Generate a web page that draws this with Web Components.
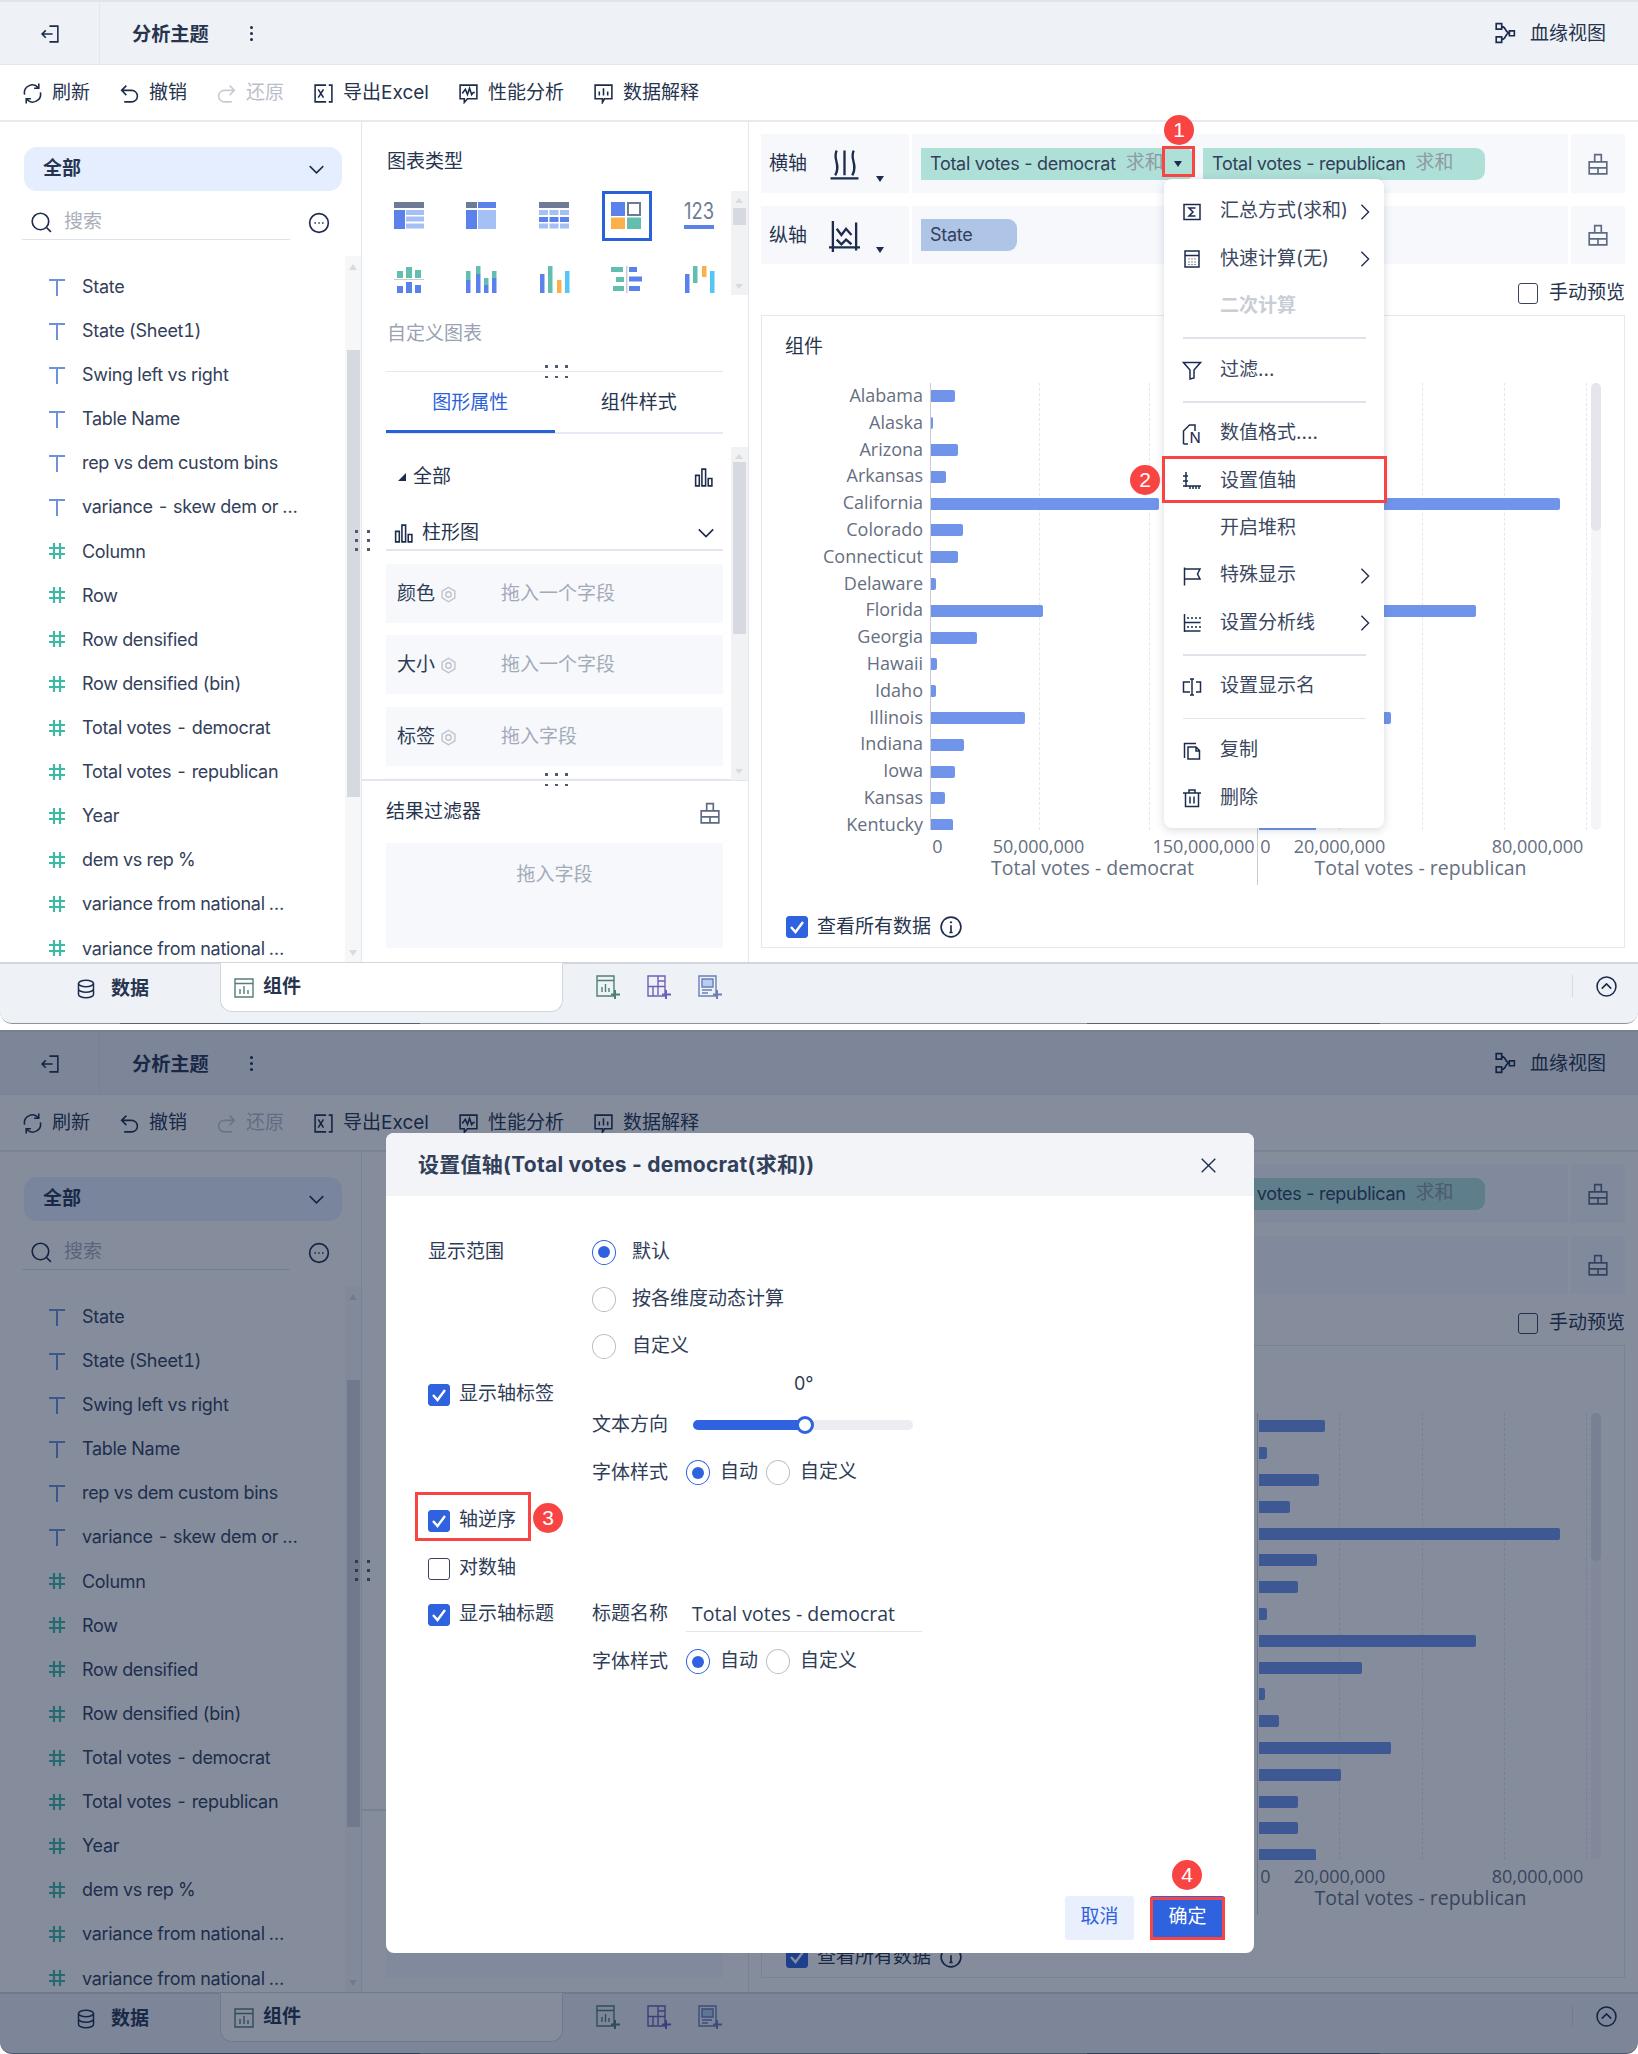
<!DOCTYPE html>
<html lang="zh">
<head>
<meta charset="utf-8">
<title>分析主题</title>
<style>
  html, body { margin: 0; background: #fff; }
  body {
    width: 1638px;
    font: 19px/1.3 Inter, "Noto Sans CJK SC", sans-serif;
    color: #27344e;
  }
  app-window + app-window { margin-top: 6px; }
</style>
</head>
<body>

<app-window>
  <context-menu></context-menu>
  <red-box x="1162" y="146" w="33" h="31"></red-box>
  <red-box x="1162" y="456" w="225" h="47"></red-box>
  <step-badge x="1179" y="130">1</step-badge>
  <step-badge x="1145" y="480">2</step-badge>
</app-window>

<app-window>
  <axis-dialog></axis-dialog>
  <red-box x="415" y="462" w="116" h="49"></red-box>
  <red-box x="1150" y="867" w="75" h="43"></red-box>
  <step-badge x="548" y="488">3</step-badge>
  <step-badge x="1187" y="845">4</step-badge>
</app-window>

<script>
const INK = '#1d2c4c';

const svg = (w, h, vb, body, stroke = INK, sw = 1.5) =>
  `<svg width="${w}" height="${h}" viewBox="0 0 ${vb}" fill="none" stroke="${stroke}" stroke-width="${sw}" style="display:block;flex:none">${body}</svg>`;

// 20x20 line icons
const lines = {
  back: '<path d="M9 3h8v15H9M12 10.500H2M5.500 7 2 10.500 5.500 14"/>',
  refresh: '<path d="M2.500 11A7.500 7.500 0 0 1 15.500 4.500M17.500 9A7.500 7.500 0 0 1 4.500 15.500M16 .5v4.500h-4.500M4 19.500V15h4.500"/>',
  undo: '<path d="M7 2.500 2.500 7 7 11.500M2.500 7H12a5.500 5.500 0 0 1 0 11H5"/>',
  excel: '<path d="M12.500 2H2v16h10.500M15 2h3v16h-3M5 6l5 8M10 6l-5 8"/>',
  perf: '<path d="M2 2h16v13h-9l-3 3.500V15H2zM4 10l3-4 2 5 2-6 2 6 1.500-2H16"/>',
  explain: '<path d="M2 2h16v13h-7l-2 3.500V15H2zM6 8v4M10 5v7M14 8v4"/>',
  lineage: '<path d="M2 1.500h5v5H2zM2 13.500h5v5H2zM14 8h4.500v4.500H14zM7 4c4 0 3 6 7 6M7 16c4 0 3-6 7-6"/>',
  search: '<circle cx="9.500" cy="9.500" r="7.500"/><path d="m15 15 4 4"/>',
  more: '<circle cx="10" cy="10" r="8.500"/><path d="M6 10h1M9.500 10h1M13 10h1" stroke-width="1.800"/>',
  bars: '<path d="M2.500 8h3.500v10H2.500zM8.500 2H12v16H8.500zM14.500 11H18v7h-3.500z"/>',
  stack: '<path d="M2 8h16v11H2zM7 8V1.500h6V8M2 13.500h16M10 13.500V19"/>',
  wave: '<path d="M1 19h18M5 1C2 6 8 10 4 17M10 1v16M16 1c-3 5 3 9-1 16"/>',
  zig: '<path d="M2.500 0v20M0 17h20M17.500 1v18M5 5l3 4 3-4 3.500 4M5 12l3 3 3-3 3.500 3"/>',
  sigma: '<path d="M2 2.500h16v15H2zM13.500 6H7l4 4-4 4h6.500"/>',
  calc: '<path d="M3 2h14v16H3zM3 6.500h14"/><path d="M6.500 10h1M9.500 10h1M12.500 10h1M6.500 13h1M9.500 13h1M12.500 13h1M6.500 15.500h1M9.500 15.500h1M12.500 15.500h1" stroke-width="1.200"/>',
  funnel: '<path d="M1.500 2.500h17L12 10v8l-4 1v-9z"/>',
  axis: '<path d="M4 1v15M1 5h5M1 10h5M1 15h18M8 15v3M11 15v3M14 15v3M17 15v3"/>',
  flag: '<path d="M2.500 1.500v18M2.500 3h15.500l-2.500 5 2.500 5H2.500"/>',
  lines: '<path d="M2.500 1v18M2.500 18h16M2.500 9.500h16" /><path d="M5 5h14M5 14h14" stroke-dasharray="2 2"/>',
  rename: '<path d="M8 5H1.500v10H8M14 5h4.500v10H14M8 2h4M8 18h4M10 2v16"/>',
  copy: '<path d="M14 2.500H2.500V17M6 6h8l3.500 3.500V18H6zM14 6v4h3.500"/>',
  trash: '<path d="M1 5h18M7 5V2h6v3M3.500 5v13.500h13V5M8 8.500v7M12 8.500v7"/>',
  db: '<ellipse cx="10" cy="4.500" rx="7.500" ry="3.200"/><path d="M2.500 4.500v11c0 1.800 3.400 3.200 7.500 3.200s7.500-1.400 7.500-3.200v-11M2.500 10c0 1.800 3.400 3.200 7.500 3.200s7.500-1.400 7.500-3.200"/>',
  up: '<circle cx="10" cy="10" r="9"/><path d="m5.500 12 4.500-4.500 4.500 4.500"/>',
  info: '<circle cx="10" cy="10" r="9"/><path d="M10 8.500V15M8.500 15h3"/><path d="M10 5v1.500" stroke-width="2"/>',
  chevD: '<path d="m2 6 8 8 8-8"/>',
  chevR: '<path d="m6 2 8 8-8 8"/>',
  gear: '<path d="M10 1.500 17.500 6v8L10 18.500 2.500 14V6z"/><circle cx="10" cy="10" r="3.200"/>',
  close: '<path d="m2 2 16 16M18 2 2 18"/>'
};
const ic = (name, size = 20, stroke = INK, sw = 1.5) => svg(size, size, '20 20', lines[name], stroke, sw);
const fmtIcon = svg(20, 22, '20 22', '<path d="M1.500 21V8l6-6H13v6M1.500 21H6"/><text x="7.500" y="20" font-family="Inter" font-size="15" fill="#1d2c4c" stroke="none">N</text>');

const boxes = (list) => list.map(([x, y, w, h, c]) => `<rect x="${x}" y="${y}" width="${w}" height="${h}" fill="${c}"/>`).join('');
const G = '#6d7c94', B = '#5b82ea', L = '#a5c0f4', T = '#62bfb0', O = '#fbb04c', S = '#54c6f5';
const typeIcon = (body) => `<svg width="31" height="27" viewBox="0 0 31 27" style="display:block">${body}</svg>`;
const chartTypes = [
  boxes([[0,0,30,6,G],[0,8,11,19,B],[12,8,18,5,L],[12,14.500,18,5,L],[12,21.500,18,5,L]]),
  boxes([[0,0,11,6,G],[12,0,18,6,B],[0,8,11,19,B],[12,8,18,19,L]]),
  boxes([[0,0,30,6,G],[0,8,9,5,L],[10.500,8,9,5,L],[21,8,9,5,L],[0,15,9,5,B],[10.500,15,9,5,B],[21,15,9,5,B],[0,21.500,9,5,L],[10.500,21.500,9,5,L],[21,21.500,9,5,L]]),
  boxes([[0,0,14,14,B],[0,15.500,14,12,O],[16,15.500,14,12,T]]) + `<rect x="17" y="1" width="12" height="12" fill="#fff" stroke="${G}" stroke-width="2"/>`,
  `<text x="0" y="17" font-family="Inter" font-size="23" textLength="30" lengthAdjust="spacingAndGlyphs" fill="${G}">123</text>` + boxes([[0,23,30,4,B]]),
  boxes([[3,5,6,7,T],[12,1,6,11,T],[21,4,6,8,T],[0,13,30,1,'#c6cbd6'],[3,20,6,7,B],[12,16,6,11,B],[21,19,6,8,B]]),
  boxes([[0,5,4.500,9,T],[0,14,4.500,13,B],[10,0,4.500,8,T],[10,8,4.500,19,B],[18,12,4.500,7,T],[18,19,4.500,8,B],[26,5,4.500,7,T],[26,12,4.500,15,B]]),
  boxes([[1,8,4.500,19,B],[9,0,4.500,27,T],[18,14,4.500,13,O],[26,5,4.500,22,S]]),
  boxes([[0,1,12,5,T],[5,11,8,5,T],[2,20,11,5,T],[15,0,1.500,27,'#c6cbd6'],[18,1,8,5,B],[18,10.500,13,5,B],[18,20,11,5,B]]),
  boxes([[1,8,4.500,19,B],[9,0,4.500,17,T],[18,0,4.500,11,O],[26,5,4.500,22,S]])
];

class Part extends HTMLElement {
  connectedCallback() {
    if (this.shadowRoot) return;
    this.attachShadow({ mode: 'open' }).innerHTML = `<style>${this.constructor.css}</style>${this.markup()}`;
  }
}

class AppWindow extends Part {
  static css = `
    :host { display: flex; flex-direction: column; position: relative; height: 1024px; overflow: hidden;
      border-radius: 0 0 12px 12px; }
    .main { display: flex; height: 840px; flex: none; }
    top-bar { flex: none; } tool-bar { flex: none; } bottom-bar { flex: none; }
  `;
  markup() {
    return `<top-bar></top-bar><tool-bar></tool-bar>
      <div class="main"><field-list></field-list><chart-setup></chart-setup><chart-area></chart-area></div>
      <bottom-bar></bottom-bar><slot></slot>`;
  }
}

class TopBar extends Part {
  static css = `
    :host { display: flex; align-items: center; height: 65px; box-sizing: border-box; background: #eef1f6;
      border-top: 2px solid #e1e4e9; border-bottom: 1px solid #e2e5ec; }
    .back { width: 100px; height: 100%; display: flex; justify-content: center; align-items: center; border-right: 1px solid #e4e7ed; box-sizing: border-box; padding-left: 2px; }
    b { margin-left: 32px; padding-top: 2px; font-size: 19.200px; font-weight: 700; }
    .dots { margin-left: 41px; display: grid; gap: 3px; }
    .dots i { display: block; width: 3px; height: 3px; border-radius: 2px; background: ${INK}; }
    .right { margin-left: auto; margin-right: 32px; display: flex; align-items: center; gap: 14px; }
    .right span { padding-top: 2px; }
  `;
  markup() {
    return `<div class="back">${ic('back', 21)}</div><b>分析主题</b>
      <div class="dots"><i></i><i></i><i></i></div>
      <div class="right">${ic('lineage', 22)}<span>血缘视图</span></div>`;
  }
}

class ToolBar extends Part {
  static css = `
    :host { display: flex; align-items: center; gap: 29px; height: 57px; box-sizing: border-box; padding: 2px 0 0 22px; background: #fff; border-bottom: 2px solid #e8e9ee; }
    span { display: flex; align-items: center; gap: 9px; white-space: nowrap; }
    .off { color: #b9bfca; }
  `;
  markup() {
    const items = [['refresh', '刷新'], ['undo', '撤销'], ['undo', '还原', 1], ['excel', '导出Excel'], ['perf', '性能分析'], ['explain', '数据解释']];
    return items.map(([i, t, off]) => off
      ? `<span class="off"><span style="transform:scaleX(-1)">${ic(i, 21, '#c6cbd4')}</span>${t}</span>`
      : `<span>${ic(i, 21)}${t}</span>`).join('');
  }
}

class FieldList extends Part {
  static css = `
    :host { display: block; position: relative; width: 362px; flex: none; box-sizing: border-box; border-right: 1px solid #e6e7ee; }
    .pick { display: flex; align-items: center; justify-content: space-between; margin: 25px 0 0 24px; width: 318px; height: 44px; box-sizing: border-box; padding: 0 17px 0 19px; background: #e5eeff; border-radius: 13px; font-weight: 700; }
    .search { display: flex; height: 49px; }
    .input { display: flex; align-items: center; gap: 12px; margin-left: 22px; width: 268px; height: 49px; padding: 14px 0 0 8px; box-sizing: border-box; border-bottom: 1.500px solid #dfe2ec; color: #a9afbb; }
    .search > svg { margin: 21px 0 0 18px; }
    .rows { margin-top: 24.500px; height: 697.500px; overflow: hidden; }
    .row { display: flex; align-items: center; height: 44.120px; padding-left: 48px; gap: 16px; white-space: nowrap; font-size: 18px; letter-spacing: -.3px; font-feature-settings: 'tnum'; color: #33405a; }
    .row u { text-decoration: none; margin-left: 4px; letter-spacing: .5px; }
    .track { position: absolute; left: 345px; top: 134px; width: 16px; height: 706px; background: #f6f7f8; }
    .thumb { position: absolute; left: 2px; right: 1px; top: 94px; height: 447px; background: #d6d9df; }
    .tri { position: absolute; left: 4px; top: 8px; border: 4px solid transparent; border-bottom: 6px solid #d8dbe0; border-top: 0; }
    .tri.down { top: auto; bottom: 6px; border-top: 6px solid #d8dbe0; border-bottom: 0; }
    .grip { position: absolute; left: 355px; top: 408px; display: grid; grid-template-columns: 2.500px 2.500px; gap: 6.500px 9.500px; }
    .grip i { height: 2.500px; background: #505a6e; }
  `;
  markup() {
    const tIcon = svg(18, 18, '18 18', '<path d="M1 2h16M9 2v16"/>', '#6d92dc', 2);
    const nIcon = svg(18, 18, '18 18', '<path d="M1 6h16M1 12h16M6 1v16M12 1v16"/>', '#3fb8a5', 2.200);
    const text = ['State', 'State (Sheet1)', 'Swing left vs right', 'Table Name', 'rep vs dem custom bins', 'variance - skew dem or<u>…</u>'];
    const nums = ['Column', 'Row', 'Row densified', 'Row densified (bin)', 'Total votes - democrat', 'Total votes - republican', 'Year', 'dem vs rep %', 'variance from national<u>…</u>', 'variance from national<u>…</u>'];
    return `<div class="pick">全部${ic('chevD', 17, INK, 1.800)}</div>
      <div class="search"><div class="input">${ic('search', 22)}搜索</div>${ic('more', 22)}</div>
      <div class="rows">
        ${text.map(t => `<div class="row">${tIcon}<span>${t}</span></div>`).join('')}
        ${nums.map(t => `<div class="row">${nIcon}<span>${t}</span></div>`).join('')}
      </div>
      <div class="track"><i class="tri"></i><div class="thumb"></div><i class="tri down"></i></div>
      <div class="grip"><i></i><i></i><i></i><i></i><i></i><i></i></div>`;
  }
}

class ChartSetup extends Part {
  static css = `
    :host { display: flex; flex-direction: column; position: relative; width: 387px; flex: none; box-sizing: border-box; border-right: 1.500px solid #e6e7ee; }
    .head { margin: 28px 0 0 25px; height: 24px; line-height: 24px; }
    .types { display: grid; grid-template-columns: repeat(5, 72.500px); grid-auto-rows: 63.500px; margin: 10px 0 0 11px; place-items: center; }
    .sel { width: 50px; height: 50px; box-sizing: border-box; border: 3px solid #2b60db; display: flex; align-items: center; justify-content: center; }
    .custom { margin: 11px 0 0 25px; height: 24px; line-height: 24px; color: #9aa2b1; }
    .rule { margin: 25px 25px 0 24px; height: 1px; background: #e6e8ee; flex: none; }
    .tabs { display: flex; margin: 0 25px 0 24px; height: 62px; border-bottom: 2px solid #e6e8f2; box-sizing: border-box; }
    .tabs span { width: 169px; text-align: center; line-height: 61px; }
    .tabs .on { color: #2b60db; border-bottom: 3px solid #2b60db; height: 61px; box-sizing: border-box; }
    .attrs { height: 345px; flex: none; overflow: hidden; padding: 17px 25px 0 24px; box-sizing: border-box; }
    .all { display: flex; align-items: center; height: 48px; padding-top: 4px; box-sizing: border-box; }
    .all i { border: 4px solid transparent; border-right-color: ${INK}; border-bottom-color: ${INK}; margin: 0 7px 0 12px; }
    .all svg { margin-left: auto; margin-right: 9px; }
    .mark { display: flex; align-items: center; height: 52px; box-sizing: border-box; padding: 18px 8px 0 7px; border-bottom: 2px solid #e2e4ee; gap: 8px; }
    .mark svg:last-child { margin-left: auto; }
    .slotbox { display: flex; align-items: center; height: 59px; box-sizing: border-box; margin-top: 12.500px; padding: 2px 0 0 11px; background: #f6f8fc; color: #2f3c56; }
    .slotbox b { font-weight: 400; width: 43px; }
    .slotbox span { margin-left: 44px; color: #a4abb8; }
    .sep { height: 1.500px; background: #e4e6ef; flex: none; }
    .filter { display: flex; align-items: center; justify-content: space-between; margin: 0 27px 0 24px; height: 62px; padding-top: 2px; box-sizing: border-box; }
    .drop { margin: 0 25px 0 24px; height: 105px; background: #f6f8fc; text-align: center; color: #a4abb8; padding-top: 20px; box-sizing: border-box; }
    .track { position: absolute; left: 369px; top: 69px; width: 17px; height: 104px; background: #f1f2f4; }
    .track.b { top: 325px; height: 333px; }
    .thumb { position: absolute; left: 2px; right: 2px; top: 17px; height: 17px; background: #d6d9df; }
    .b .thumb { top: 15px; height: 172px; }
    .tri { position: absolute; left: 4px; top: 7px; border: 4.500px solid transparent; border-bottom: 5px solid #d8dbe0; border-top: 0; }
    .tri.down { top: auto; bottom: 6px; border-top: 5px solid #d8dbe0; border-bottom: 0; }
    .grip { position: absolute; left: 183px; display: grid; grid-template-columns: repeat(3, 2.500px); gap: 8px 7.500px; }
    .grip i { height: 2.500px; background: #505a6e; }
  `;
  markup() {
    const cells = chartTypes.map((b, i) => i === 3 ? `<div class="sel">${typeIcon(b)}</div>` : typeIcon(b)).join('');
    const gearIc = ic('gear', 17, '#bcc1cb', 1.600);
    const fill = (l, h) => `<div class="slotbox"><b>${l}</b>${gearIc}<span>${h}</span></div>`;
    const grip = (t) => `<div class="grip" style="top:${t}px"><i></i><i></i><i></i><i></i><i></i><i></i></div>`;
    return `<div class="head">图表类型</div>
      <div class="types">${cells}</div>
      <div class="custom">自定义图表</div>
      <div class="rule"></div>
      <div class="tabs"><span class="on">图形属性</span><span>组件样式</span></div>
      <div class="attrs">
        <div class="all"><i></i>全部${ic('bars', 21)}</div>
        <div class="mark">${ic('bars', 21)}柱形图${ic('chevD', 18, INK, 1.800)}</div>
        ${fill('颜色', '拖入一个字段')}${fill('大小', '拖入一个字段')}${fill('标签', '拖入字段')}
        <div class="slotbox"></div>
      </div>
      <div class="sep"></div>
      <div class="filter">结果过滤器${ic('stack', 22, '#5d6a82')}</div>
      <div class="drop">拖入字段</div>
      <div class="track"><i class="tri"></i><div class="thumb"></div><i class="tri down"></i></div>
      <div class="track b"><i class="tri"></i><div class="thumb"></div><i class="tri down"></i></div>
      ${grip(243)}${grip(651)}`;
  }
}

class ChartArea extends Part {
  static css = `
    :host { display: flex; flex-direction: column; flex: 1; min-width: 0; padding: 12px 13px 14px 12px; box-sizing: border-box; }
    .shelf { display: flex; gap: 3px; height: 59px; flex: none; }
    .shelf + .shelf { margin-top: 13px; height: 58px; }
    .shelf > div { background: #f6f8fc; display: flex; align-items: center; }
    .name { width: 148px; box-sizing: border-box; padding: 2px 0 0 8px; position: relative; }
    .name svg { margin-left: 22px; }
    .name i { position: absolute; left: 115px; bottom: 11px; border: 4px solid transparent; border-top: 6px solid ${INK}; border-bottom: 0; }
    .drop { flex: 1; padding-left: 9px; gap: 9px; }
    .end { width: 54px; justify-content: center; }
    .manual { display: flex; align-items: center; justify-content: flex-end; gap: 11px; height: 51px; padding-top: 7px; box-sizing: border-box; flex: none; }
    .manual i { display: block; box-sizing: border-box; width: 20px; height: 21px; border: 1.500px solid #3a455c; border-radius: 3px; }
    .card { flex: 1; min-height: 0; border: 1.500px solid #e6e8ef; position: relative; }
  `;
  markup() {
    return `<div class="shelf">
        <div class="name">横轴${ic('wave', 31)}<i></i></div>
        <div class="drop">
          <field-pill w="273" bg="#aee0d8" tail="求和" arrow>Total votes - democrat</field-pill>
          <field-pill w="282" bg="#aee0d8" tail="求和">Total votes - republican</field-pill>
        </div>
        <div class="end">${ic('stack', 22, '#5d6a82')}</div>
      </div>
      <div class="shelf">
        <div class="name">纵轴${ic('zig', 31)}<i></i></div>
        <div class="drop"><field-pill w="96" bg="#aec5e8">State</field-pill></div>
        <div class="end">${ic('stack', 22, '#5d6a82')}</div>
      </div>
      <div class="manual"><i></i>手动预览</div>
      <div class="card"><bar-chart></bar-chart></div>`;
  }
}

class FieldPill extends Part {
  static css = `
    :host { display: flex; align-items: center; height: 32px; box-sizing: border-box; padding-left: 9px; border-radius: 0 9px 9px 0; white-space: nowrap; font-size: 18px; letter-spacing: -.3px; color: #33405a; }
    em { font-style: normal; color: #8f9aa3; margin-left: 10px; font-size: 19px; letter-spacing: 0; }
    i { margin-left: auto; margin-right: 12px; border: 4px solid transparent; border-top: 6px solid ${INK}; border-bottom: 0; }
  `;
  markup() {
    this.style.width = this.getAttribute('w') + 'px';
    this.style.background = this.getAttribute('bg');
    const tail = this.getAttribute('tail');
    return `<slot></slot>${tail ? `<em>${tail}</em>` : ''}${this.hasAttribute('arrow') ? '<i></i>' : ''}`;
  }
}

const STATES = [
  ['Alabama', 23.500, 66], ['Alaska', 2, 8], ['Arizona', 27, 60], ['Arkansas', 14.500, 31], ['California', 228, 301],
  ['Colorado', 32, 58], ['Connecticut', 27, 39], ['Delaware', 5, 8], ['Florida', 112, 217], ['Georgia', 46, 103],
  ['Hawaii', 6, 6], ['Idaho', 5, 20], ['Illinois', 94, 132], ['Indiana', 33, 82], ['Iowa', 23.500, 39],
  ['Kansas', 14, 39], ['Kentucky', 22, 57]
];

class BarChart extends Part {
  static css = `
    :host { display: flex; flex-direction: column; height: 100%; font-family: "Open Sans", sans-serif; font-size: 18px; color: #666f7f; position: relative; }
    .title { height: 62px; line-height: 62px; padding-left: 23px; font-family: Inter, "Noto Sans CJK SC", sans-serif; font-size: 19px; color: #27344e; flex: none; }
    .plot { display: flex; height: 447px; flex: none; margin-top: 5px; }
    .names { width: 161px; flex: none; text-align: right; margin-top: -1px; height: 447px; }
    .names div { height: 26.800px; line-height: 26.800px; white-space: nowrap; }
    .pane { position: relative; border-left: 1.500px solid #c9ccd4; box-sizing: border-box; margin-left: 7px; width: 327px; flex: none; overflow: hidden; }
    .pane + .pane { margin-left: 0; width: 334px; padding-left: 1px; }
    .bar { height: 26.800px; display: flex; align-items: center; position: relative; }
    .bar i { display: block; height: 12px; background: #7094ea; border-radius: 0 2px 2px 0; }
    .grid { position: absolute; top: 0; bottom: 0; width: 0; border-left: 1.500px dashed #e5e7ec; }
    .scroll { width: 10px; height: 447px; flex: none; background: #f4f5f7; border-radius: 5px; position: relative; }
    .scroll i { display: block; height: 148px; border-radius: 5px; background: #e4e6eb; }
    .ticks { position: relative; height: 24px; flex: none; line-height: 30px; margin-top: 1px; }
    .ticks span { position: absolute; top: 0; transform: translateX(-50%); white-space: nowrap; }
    .ticks.t { font-size: 19.500px; margin-top: -2px; }
    .line { position: absolute; left: 494.500px; top: 514px; height: 55px; border-left: 1.500px solid #c9ccd4; }
    .all { display: flex; align-items: center; gap: 9px; margin: 38px 0 0 24px; font-family: Inter, "Noto Sans CJK SC", sans-serif; font-size: 19px; color: #27344e; }
  `;
  markup() {
    const grid = (xs) => xs.map(x => `<div class="grid" style="left:${x}px"></div>`).join('');
    const pane = (k, g) => `<div class="pane">${grid(g)}${STATES.map(s => `<div class="bar"><i style="width:${s[k]}px"></i></div>`).join('')}</div>`;
    const tick = (x, t) => `<span style="left:${x - 762.500}px">${t}</span>`;
    return `<div class="title">组件</div>
      <div class="plot">
        <div class="names">${STATES.map(s => `<div>${s[0]}</div>`).join('')}</div>
        ${pane(1, [108, 218])}
        ${pane(2, [81, 164, 246, 328])}
        <div class="scroll"><i></i></div>
      </div>
      <div class="ticks">
        ${tick(938, '0')}${tick(1039, '50,000,000')}${tick(1204, '150,000,000')}
        ${tick(1266, '0')}${tick(1340, '20,000,000')}${tick(1538, '80,000,000')}
      </div>
      <div class="ticks t">${tick(1093, 'Total votes - democrat')}${tick(1421, 'Total votes - republican')}</div>
      <div class="line"></div>
      <div class="all"><check-box checked></check-box>查看所有数据${ic('info', 22)}</div>`;
  }
}

class BottomBar extends Part {
  static css = `
    :host { display: flex; position: relative; height: 62px; box-sizing: border-box; border-top: 2px solid #d3d6df; background: #eef1f6; border-bottom: 1.500px solid #8f939b; border-radius: 0 0 12px 12px; }
    b { font-weight: 700; }
    .data { width: 220px; flex: none; display: flex; align-items: center; box-sizing: border-box; padding: 0 0 9px 76px; gap: 15px; }
    .tab { width: 343px; height: 49px; margin-top: -1px; flex: none; box-sizing: border-box; background: #fff; display: flex; align-items: center; padding: 0 0 0 13px; gap: 9px; border: 1.500px solid #d3d6df; border-top-color: #fff; border-radius: 0 0 12px 12px; }
    .add { display: flex; gap: 27px; margin: 11px 0 0 33px; }
    .end { margin-left: auto; margin-top: 11px; height: 22px; padding: 0 21px 0 23px; border-left: 1px solid #d8dae2; display: flex; align-items: center; }
    .edge { position: absolute; left: 0; right: 0; bottom: -1.500px; height: 1.500px; background: linear-gradient(to right, transparent 120px, #596070 120px, #596070 420px, transparent 420px, transparent 1087px, #596070 1087px, #596070 1380px, transparent 1380px); }
  `;
  markup() {
    const sheet = (c, inner) => svg(24, 25, '24 25', `<path d="M1 1h17v20H1z" />${inner}<path d="M19 15v9M15 19.500h9" stroke-width="2" stroke="${c}"/>`, c, 1.400);
    return `<div class="data">${ic('db', 20)}<b>数据</b></div>
      <div class="tab">${svg(20, 20, '20 20', '<path d="M1 1h18v18H1zM1 5.500h18M6 16v-5M10 16V8M14 16v-4"/>', '#557d78', 1.400)}<b>组件</b></div>
      <div class="add">
        ${sheet('#4f8076', '<path d="M1 5.500h17M6 17v-5M9.500 17V9M13 17v-4"/>')}
        ${sheet('#6d60b8', '<path d="M11 1v19M1 11.500h17M6 11.500V21M11 6h7"/>')}
        ${sheet('#6a7fb5', '<path d="M4 4h11v8H4z" fill="#b9cdf0"/><path d="M4 15h10M4 18h6"/>')}
      </div>
      <div class="end">${ic('up', 21)}</div>
      <div class="edge"></div>`;
  }
}

class ContextMenu extends Part {
  static css = `
    :host { position: absolute; left: 1164px; top: 179px; width: 220px; height: 649px; box-sizing: border-box; padding-top: 9px; background: #fff; border-radius: 8px; box-shadow: 0 2px 10px rgba(40, 50, 80, .18); color: #3b4760; }
    .it { display: flex; align-items: center; height: 47.300px; padding-left: 18px; position: relative; }
    .it > span { margin-left: 18px; white-space: nowrap; }
    .it .gap { width: 20px; flex: none; }
    .it .arrow { position: absolute; left: 192px; margin: 0; }
    .off { color: #c9ced6; font-weight: 700; }
    .div { height: 1.500px; margin: 7.500px 18px 7.500px 19px; background: #e1e3ea; }
  `;
  markup() {
    const item = (icon, text, arrow, cls = '') => `<div class="it ${cls}">${icon || '<div class="gap"></div>'}<span>${text}</span>${arrow ? `<span class="arrow">${ic('chevR', 18)}</span>` : ''}</div>`;
    const line = '<div class="div"></div>';
    return item(ic('sigma'), '汇总方式(求和)', 1) + item(ic('calc'), '快速计算(无)', 1) + item('', '二次计算', 0, 'off') + line +
      item(ic('funnel'), '过滤...') + line +
      item(fmtIcon, '数值格式....') + item(ic('axis'), '设置值轴') + item('', '开启堆积') +
      item(ic('flag'), '特殊显示', 1) + item(ic('lines'), '设置分析线', 1) + line +
      item(ic('rename'), '设置显示名') + line +
      item(ic('copy'), '复制') + item(ic('trash'), '删除');
  }
}

class StepBadge extends Part {
  static css = `
    :host { position: absolute; width: 30px; height: 30px; margin: -15px 0 0 -15px; border-radius: 50%; background: #f94444; color: #fff; font: 21px/30px "Liberation Sans", sans-serif; text-align: center; }
  `;
  markup() {
    this.style.left = this.getAttribute('x') + 'px';
    this.style.top = this.getAttribute('y') + 'px';
    return '<slot></slot>';
  }
}

class RedBox extends Part {
  static css = `:host { position: absolute; box-sizing: border-box; border: 3px solid #f94444; }`;
  markup() {
    const a = (k) => this.getAttribute(k) + 'px';
    this.style.cssText = `left:${a('x')};top:${a('y')};width:${a('w')};height:${a('h')}`;
    return '';
  }
}

class CheckBox extends Part {
  static css = `
    :host { display: inline-flex; align-items: center; gap: 9px; white-space: nowrap; }
    i { display: flex; align-items: center; justify-content: center; box-sizing: border-box; width: 22px; height: 22px; border: 1.500px solid #3a455c; border-radius: 3px; flex: none; }
    i.on { background: #2e62de; border-color: #2e62de; }
  `;
  markup() {
    const on = this.hasAttribute('checked');
    return `<i class="${on ? 'on' : ''}">${on ? svg(16, 14, '16 14', '<path d="m2 7 4.500 5L14 2"/>', '#fff', 2.400) : ''}</i><slot></slot>`;
  }
}

class RadioOpt extends Part {
  static css = `
    :host { display: inline-flex; align-items: center; gap: var(--gap, 16px); white-space: nowrap; }
    i { display: flex; align-items: center; justify-content: center; box-sizing: border-box; width: 24px; height: 25px; border: 1.500px solid #b9bec8; border-radius: 50%; flex: none; }
    i.on { border-color: #2e62de; }
    i.on::after { content: ''; width: 12px; height: 12px; border-radius: 50%; background: #2e62de; }
  `;
  markup() {
    return `<i class="${this.hasAttribute('checked') ? 'on' : ''}"></i><slot></slot>`;
  }
}

class AxisDialog extends Part {
  static css = `
    :host { position: absolute; inset: 0; background: rgba(12, 28, 60, .5); }
    .box { position: absolute; left: 386px; top: 103px; width: 868px; height: 820px; background: #fff; border-radius: 8px; overflow: hidden; display: flex; flex-direction: column; color: #2f3c56; }
    .head { height: 63px; flex: none; background: #f2f4f8; display: flex; align-items: center; justify-content: space-between; padding: 1px 37px 0 32px; box-sizing: border-box; font-weight: 700; font-size: 21px; letter-spacing: .25px; color: #33405a; }
    .body { flex: 1; display: flex; padding: 32.500px 0 0 42px; min-height: 0; }
    .l { width: 164px; flex: none; padding-top: 1px; }
    .l > * { display: flex; height: 46px; align-items: center; }
    .r { flex: 1; }
    .row { display: flex; align-items: center; height: 47px; }
    .lab { width: 94px; flex: none; padding-top: 2px; }
    .zero { height: 28px; line-height: 28px; padding-left: 202px; font-size: 18px; }
    .track { width: 220px; height: 10px; border-radius: 5px; margin-left: 7px; background: #ecedf0; position: relative; }
    .track u { display: block; width: 112px; height: 100%; border-radius: 5px; background: #2e62de; }
    .track b { position: absolute; left: 103px; top: -4px; width: 18px; height: 18px; box-sizing: border-box; border: 3.500px solid #2e62de; border-radius: 50%; background: #fff; }
    radio-opt { --gap: 10px; }
    radio-opt + radio-opt { margin-left: 8px; }
    .name { flex: none; align-self: flex-start; width: 236px; height: 36px; line-height: 36px; margin: 5px 0 0 0; box-sizing: border-box; padding-left: 6px; border-bottom: 1.500px solid #e3e5ea; font-family: "Open Sans", sans-serif; font-size: 19.500px; }
    .foot { display: flex; justify-content: flex-end; gap: 16px; padding: 0 29px 13px 0; }
    .btn { width: 69px; height: 44px; line-height: 42px; text-align: center; border-radius: 3px; background: #e9effc; color: #2e62de; }
    .btn.ok { width: 75px; background: #2e62de; color: #fff; }
  `;
  markup() {
    const style = `<div class="lab">字体样式</div><radio-opt checked>自动</radio-opt><radio-opt>自定义</radio-opt>`;
    return `<div class="box">
      <div class="head"><span>设置值轴(Total votes - democrat(求和))</span>${ic('close', 17, INK, 1.600)}</div>
      <div class="body">
        <div class="l">
          <div>显示范围</div>
          <div style="margin-top:96px"><check-box checked>显示轴标签</check-box></div>
          <div style="margin-top:80px"><check-box checked>轴逆序</check-box></div>
          <div style="margin-top:2px"><check-box>对数轴</check-box></div>
          <div><check-box checked>显示轴标题</check-box></div>
        </div>
        <div class="r">
          <div class="row"><radio-opt checked style="--gap:16px">默认</radio-opt></div>
          <div class="row"><radio-opt style="--gap:16px">按各维度动态计算</radio-opt></div>
          <div class="row"><radio-opt style="--gap:16px">自定义</radio-opt></div>
          <div class="zero">0°</div>
          <div class="row" style="height:54px"><div class="lab">文本方向</div><div class="track"><u></u><b></b></div></div>
          <div class="row" style="height:42px">${style}</div>
          <div class="row" style="height:46px;margin-top:97px"><div class="lab">标题名称</div><div class="name">Total votes - democrat</div></div>
          <div class="row" style="height:50px">${style}</div>
        </div>
      </div>
      <div class="foot"><div class="btn">取消</div><div class="btn ok">确定</div></div>
    </div>`;
  }
}

const parts = {
  'top-bar': TopBar, 'tool-bar': ToolBar, 'field-list': FieldList, 'chart-setup': ChartSetup,
  'chart-area': ChartArea, 'field-pill': FieldPill, 'bar-chart': BarChart, 'bottom-bar': BottomBar,
  'context-menu': ContextMenu, 'step-badge': StepBadge, 'red-box': RedBox, 'check-box': CheckBox,
  'radio-opt': RadioOpt, 'axis-dialog': AxisDialog, 'app-window': AppWindow
};
for (const [name, cls] of Object.entries(parts)) customElements.define(name, cls);
</script>
</body>
</html>
